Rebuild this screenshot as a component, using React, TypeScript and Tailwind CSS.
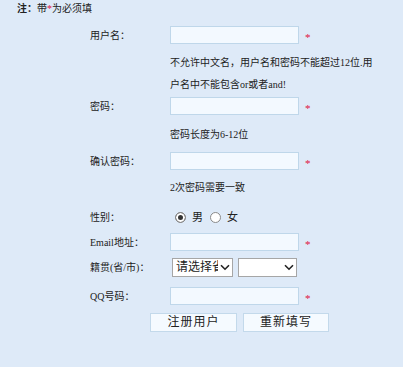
import React from 'react'

const inputCls =
  'w-[129px] h-[18px] border border-[#bfd7ea] bg-[#f3f9ff] outline-none px-1 text-[11px]'

function Star() {
  return <span className="ml-[6px] mt-[4px] text-[11px] leading-none text-[#e0103f]">*</span>
}

function Field({ label, children, className = '' }: { label: string; children: React.ReactNode; className?: string }) {
  return (
    <div className={`flex items-center ${className}`}>
      <label className="ml-[90px] w-[80px] shrink-0">{label}</label>
      {children}
    </div>
  )
}

function Hint({ children, className = '' }: { children: React.ReactNode; className?: string }) {
  return <div className={`ml-[170px] leading-[22px] ${className}`}>{children}</div>
}

function Select({ width, text }: { width: string; text?: string }) {
  return (
    <div className={`relative ${width} h-[19px]`}>
      <select className="w-full h-full appearance-none border border-[#a6a6a6] bg-white pl-[3px] pr-[14px] text-[12px] leading-[17px] text-[#222] outline-none overflow-hidden">
        <option>{text ?? ''}</option>
      </select>
      <svg
        className="pointer-events-none absolute right-[3px] top-[6px]"
        width="10"
        height="7"
        viewBox="0 0 10 7"
        aria-hidden
      >
        <path d="M1 1.2 5 5.2 9 1.2" fill="none" stroke="#222" strokeWidth="1.6" />
      </svg>
    </div>
  )
}

export default function App() {
  const [sex, setSex] = React.useState('m')
  const radioCls =
    'appearance-none w-[11px] h-[11px] rounded-full border border-[#8a8a8a] bg-white checked:bg-[#333] checked:shadow-[inset_0_0_0_2px_#fff] m-0'

  return (
    <div className="w-[403px] h-[367px] overflow-hidden bg-[#deeaf8] text-[10px] text-[#222] font-['Liberation_Serif','Noto_Sans_CJK_SC',serif]">
      <p className="h-[26px] pl-[17px] pt-[3px] leading-[12px]">
        <b>注：</b>带<span className="text-[#e0103f]">*</span>为必须填
      </p>

      <Field label="用户名：">
        <input className={inputCls} />
        <Star />
      </Field>
      <Hint className="mt-[8px]">
        不允许中文名，用户名和密码不能超过12位.用
        <br />
        户名中不能包含or或者and!
      </Hint>

      <Field label="密码：" className="mt-[1px]">
        <input type="password" className={inputCls} />
        <Star />
      </Field>
      <Hint className="mt-[9px]">密码长度为6-12位</Hint>

      <Field label="确认密码：" className="mt-[6px]">
        <input type="password" className={inputCls} />
        <Star />
      </Field>
      <Hint className="mt-[7px]">2次密码需要一致</Hint>

      <Field label="性别：" className="mt-[9px] h-[18px]">
        <label className="ml-[5px] flex items-center gap-[6px]">
          <input type="radio" name="sex" className={radioCls} checked={sex === 'm'} onChange={() => setSex('m')} />
          <span className="text-[11px]">男</span>
        </label>
        <label className="ml-[7px] flex items-center gap-[6px]">
          <input type="radio" name="sex" className={radioCls} checked={sex === 'f'} onChange={() => setSex('f')} />
          <span className="text-[11px]">女</span>
        </label>
      </Field>

      <Field label="Email地址：" className="mt-[7px]">
        <input className={inputCls} />
        <Star />
      </Field>

      <Field label="籍贯(省/市)：" className="mt-[7px]">
        <div className="ml-[2px] flex gap-[5px]">
          <Select width="w-[61px]" text="请选择省份" />
          <Select width="w-[59px]" />
        </div>
      </Field>

      <Field label="QQ号码：" className="mt-[10px]">
        <input className={inputCls} />
        <Star />
      </Field>

      <div className="mt-[8px] ml-[150px] flex gap-[6px]">
        <button className="w-[87px] h-[19px] border border-[#c3d9eb] bg-[#f5faff] text-[12px] leading-[17px] tracking-[1px]">
          注册用户
        </button>
        <button className="w-[86px] h-[19px] border border-[#c3d9eb] bg-[#f5faff] text-[12px] leading-[17px] tracking-[1px]">
          重新填写
        </button>
      </div>
    </div>
  )
}
